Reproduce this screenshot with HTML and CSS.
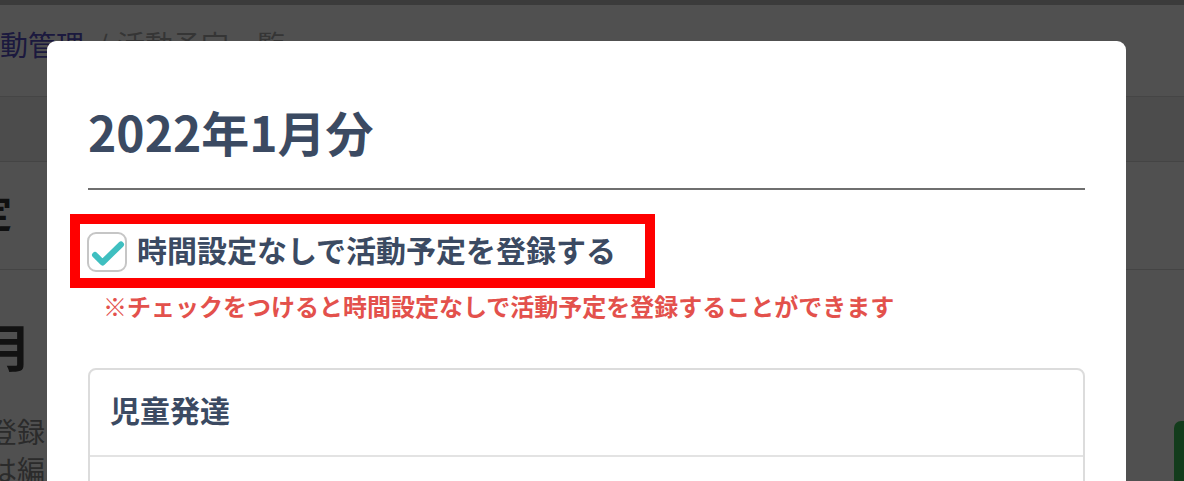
FILE: index.html
```html
<!DOCTYPE html>
<html lang="ja">
<head>
<meta charset="utf-8">
<title>活動予定一覧</title>
<link rel="stylesheet" href="styles.css">
</head>
<body>
<div class="page">
  <div class="topbar"></div>
  <nav class="crumbs"><a class="crumb-link">活動管理</a><span class="crumb-sep">/</span><span class="crumb-current">活動予定一覧</span></nav>
  <div class="toolbar"></div>
  <div class="page-head"><h1 class="page-title">活動予定</h1></div>
  <section class="month">
    <h2 class="month-title">2022年1月</h2>
    <p class="month-text">活動予定の登録<br>既存の予定は編</p>
  </section>
  <button class="fab" type="button"></button>
</div>

<div class="backdrop"></div>

<div class="modal">
  <h2 class="modal-title">2022年1月分</h2>
  <hr class="modal-rule">
  <div class="check-wrap">
    <label class="check-row">
      <svg class="check-box" width="40" height="40" viewBox="0 0 40 40">
        <rect x="1" y="1" width="38" height="38" rx="8" ry="8" fill="#fff" stroke="#c6c6c6" stroke-width="2"/>
        <path d="M8 23 L15.5 30.5 L34 12.5" fill="none" stroke="#3fbfc0" stroke-width="6" stroke-linecap="round" stroke-linejoin="round"/>
      </svg>
      <span class="check-label">時間設定なしで活動予定を登録する</span>
    </label>
  </div>
  <p class="hint">※チェックをつけると時間設定なしで活動予定を登録することができます</p>
  <div class="card">
    <div class="card-head">児童発達</div>
    <div class="card-body"></div>
  </div>
</div>
</body>
</html>
```

FILE: styles.css
```css
html, body {
  margin: 0;
  padding: 0;
  background: #ffffff;
  overflow: hidden;
}

body {
  font-family: "Noto Sans CJK JP", "Noto Sans", sans-serif;
  width: 1184px;
  height: 481px;
}

.page {
  width: 1184px;
}

.topbar {
  height: 5px;
  background: #bdbdbd;
}

.crumbs {
  display: flex;
  align-items: center;
  height: 40px;
  padding: 19px 0 32px;
  margin-left: -28px;
  font-size: 28px;
  line-height: 40px;
  white-space: nowrap;
  border-bottom: 1px solid #dcdcdc;
}

.crumb-link {
  color: #5650c4;
}

.crumb-sep {
  color: #aaaaaa;
  margin: 0 11px 0 13px;
  width: 9px;
}

.crumb-current {
  color: #aaaaaa;
}

.toolbar {
  height: 64px;
  background: #f1f1f1;
  border-bottom: 1px solid #d8d8d8;
}

.page-head {
  padding: 24px 0 33px;
  border-bottom: 1px solid #d8d8d8;
}

.page-title {
  margin: 0 0 0 -140px;
  font-size: 38px;
  line-height: 50px;
  font-weight: 700;
  color: #333333;
  white-space: nowrap;
}

.month {
  width: 47px;
  overflow: hidden;
  padding-top: 45px;
}

.month-title {
  margin: 0 0 37px -216px;
  font-size: 50px;
  line-height: 60px;
  font-weight: 700;
  color: #3a3a3a;
  white-space: nowrap;
}

.month-text {
  margin: 0 0 0 -151px;
  font-size: 28px;
  line-height: 38px;
  color: #8a8a8a;
  white-space: nowrap;
}

.fab {
  position: fixed;
  left: 1174px;
  top: 421px;
  width: 70px;
  height: 70px;
  border: 0;
  border-radius: 7px;
  background: #3ec05b;
}

.backdrop {
  position: fixed;
  inset: 0;
  background: rgba(0, 0, 0, 0.686);
}

.modal {
  position: fixed;
  left: 47px;
  top: 41px;
  width: 997px;
  height: 520px;
  padding: 61px 41px 0;
  background: #ffffff;
  border-radius: 9px;
  color: #3b4a62;
}

.modal-title {
  margin: 0 0 28px;
  font-size: 48px;
  line-height: 58px;
  font-weight: 700;
  color: #3b4a62;
}

.modal-rule {
  margin: 0 0 24px;
  height: 2px;
  border: 0;
  background: #6f6f6f;
}

.check-wrap {
  display: flex;
}

.check-row {
  display: flex;
  align-items: center;
  margin-left: -18px;
  padding: 8px 29px 6px 7px;
  border: 10px solid #ff0000;
}

.check-box {
  display: block;
  flex: none;
}

.check-label {
  margin-left: 10px;
  margin-bottom: 6px;
  font-size: 30px;
  line-height: 34px;
  font-weight: 700;
  color: #3b4a62;
  white-space: nowrap;
}

.hint {
  margin: 0 0 0 15px;
  font-size: 24px;
  line-height: 36px;
  font-weight: 700;
  color: #e3514c;
  white-space: nowrap;
}

.card {
  margin-top: 44px;
  border: 2px solid #dcdcdc;
  border-radius: 8px;
}

.card-head {
  padding: 17px 20px 23px;
  font-size: 30px;
  line-height: 45px;
  font-weight: 700;
  color: #3b4a62;
  border-bottom: 2px solid #e3e3e3;
}

.card-body {
  height: 200px;
}
```
